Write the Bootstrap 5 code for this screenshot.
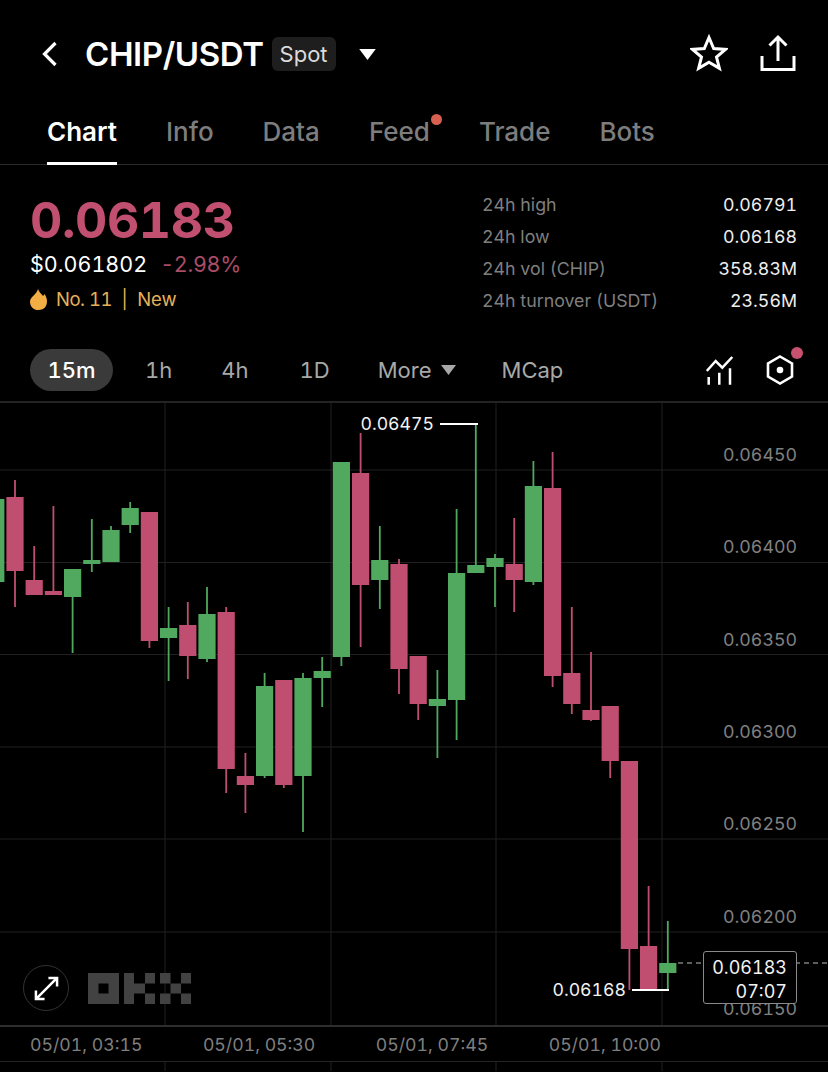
<!DOCTYPE html>
<html lang="en">

<head>
    <meta charset="UTF-8">
    <meta name="viewport" content="width=device-width, initial-scale=1.0">
    <title>CHIP/USDT Spot</title>
    <link href="https://cdn.jsdelivr.net/npm/bootstrap@5.3.0/dist/css/bootstrap.min.css" rel="stylesheet">
    <style>
        html, body { background: #000; }
        body { width: 828px; height: 1072px; overflow: hidden; font-family: Inter, "Liberation Sans", sans-serif; color: #fff; font-variant-numeric: tabular-nums; }

        .top-bar { height: 108px; padding-left: 41px; padding-right: 32px; }
        .pair-name { font-size: 33px; font-weight: 600; letter-spacing: -0.4px; margin-left: 27px; line-height: 1; }
        .spot-tag { background: #1e1e1e; color: #dcdcdc; font-size: 22px; line-height: 34px; padding: 0 8px; border-radius: 6px; margin-left: 8px; }
        .tri-white { margin-left: 23px; }
        .top-icons { gap: 32px; margin-top: -2px; }

        .tab-bar { height: 57px; padding-left: 47px; gap: 49px; border-bottom: 1px solid #2b2b2b; flex-wrap: nowrap; }
        .tab-bar .nav-link { padding: 0; color: #7d7d7d; font-size: 26px; font-weight: 500; height: 56px; line-height: 48px; position: relative; }
        .tab-bar .nav-link.active { color: #fff; font-weight: 600; border-bottom: 3px solid #fff; height: 57px; }
        .feed-dot { position: absolute; top: 6px; right: -12px; width: 11px; height: 11px; border-radius: 50%; background: #d8604f; }

        .stats-area { height: 184px; padding: 0 31px 0 30px; }
        .big-price { color: #c14f70; font-size: 50px; font-weight: 700; line-height: 1; margin-top: 30px; letter-spacing: -0.4px; }
        .usd-line { font-size: 21.5px; line-height: 26px; margin-top: 6px; }
        .pct-val { color: #a94c66; margin-left: 13px; letter-spacing: -0.3px; }
        .rank-line { color: #e6b05a; font-size: 18.5px; line-height: 24px; margin-top: 10px; }
        .flame-icon { margin-right: 9px; }
        .rank-no { letter-spacing: -0.5px; }
        .rank-sep { margin: 0 9.5px; }
        .stat-list { width: 315px; margin-top: 24px; font-size: 17.8px; line-height: 32px; }
        .stat-label { color: #7f7f7f; }
        .stat-val { color: #eee; }

        .range-bar { height: 52px; padding-left: 30px; }
        .range-item { color: #a8a8a8; font-size: 22px; line-height: 42px; }
        .range-pill { background: #3a3a3a; color: #fff; font-weight: 500; width: 83px; height: 42px; border-radius: 21px; text-align: center; }
        .range-tools { position: relative; margin-left: auto; margin-right: 34px; gap: 32px; height: 42px; }
        .tool-dot { position: absolute; right: -9px; top: -2px; width: 12px; height: 12px; border-radius: 50%; background: #c8516f; }

        .chart-wrap { position: relative; width: 828px; height: 624px; border-top: 2px solid #232323; }
        .chart-wrap svg { display: block; }
        .expand-btn { position: absolute; left: 23px; top: 562px; width: 46px; height: 46px; border: 1.5px solid #333; border-radius: 50%; background: #000; }
        .okx-logo { position: absolute; left: 88px; top: 570px; }
        .last-tag { position: absolute; left: 703px; top: 548px; width: 94px; height: 53px; border: 1px solid #8a8a8a; border-radius: 3px; background: #000; color: #f2f2f2; font-size: 18px; line-height: 23.5px; padding: 4px 9px 0 0; text-align: right; }

        .time-axis { height: 37px; border-top: 2px solid #2e2e2e; border-bottom: 1px solid #232323; color: #7f7f7f; font-size: 17.7px; padding-left: 30px; gap: 60.5px; line-height: 35px; white-space: nowrap; }
    </style>
</head>

<body>

    <!-- Title row -->
    <div class="top-bar d-flex align-items-center">
        <svg width="17" height="26" viewBox="0 0 17 26"><path d="M14.5 2 3.5 13l11 11" fill="none" stroke="#fff" stroke-width="3.2"/></svg>
        <span class="pair-name">CHIP/USDT</span>
        <span class="spot-tag">Spot</span>
        <svg class="tri-white" width="17" height="11" viewBox="0 0 18 12"><path d="M0 0h18L9 12z" fill="#fff"/></svg>
        <div class="top-icons ms-auto d-flex align-items-center">
            <svg width="38" height="38" viewBox="0 0 38 38"><path d="M19 3.500l4.700 11 11.800.9-9 7.600 2.900 11.400-10.400-6.200-10.400 6.200 2.900-11.400-9-7.600 11.800-.9z" fill="none" stroke="#fff" stroke-width="3"/></svg>
            <svg width="36" height="38" viewBox="0 0 36 38"><path d="M2 22v13.500h32V22M18 27V3M9.500 11.500 18 3l8.500 8.500" fill="none" stroke="#fff" stroke-width="3"/></svg>
        </div>
    </div>

    <!-- Tabs -->
    <ul class="nav tab-bar">
        <li class="nav-item"><a class="nav-link active" href="#">Chart</a></li>
        <li class="nav-item"><a class="nav-link" href="#">Info</a></li>
        <li class="nav-item"><a class="nav-link" href="#">Data</a></li>
        <li class="nav-item"><a class="nav-link" href="#">Feed<span class="feed-dot"></span></a></li>
        <li class="nav-item"><a class="nav-link" href="#">Trade</a></li>
        <li class="nav-item"><a class="nav-link" href="#">Bots</a></li>
    </ul>

    <!-- Price and 24h stats -->
    <div class="stats-area d-flex justify-content-between">
        <div>
            <div class="big-price">0.06183</div>
            <div class="usd-line">$0.061802<span class="pct-val">-2.98%</span></div>
            <div class="rank-line d-flex align-items-center">
                <svg class="flame-icon" width="17" height="21" viewBox="0 0 17 21"><path d="M8 0c1 3 3 4.500 5 7 .8-.6 1.200-1.300 1.300-2C16 7 17 9.500 17 12.500 17 17.500 13.500 21 8.500 21S0 17.500 0 12.700C0 8 6.500 5.500 8 0z" fill="#f0ae45"/></svg>
                <span class="rank-no">No. 11</span><span class="rank-sep">|</span><span>New</span>
            </div>
        </div>
        <div class="stat-list">
            <div class="d-flex justify-content-between"><span class="stat-label">24h high</span><span class="stat-val">0.06791</span></div>
            <div class="d-flex justify-content-between"><span class="stat-label">24h low</span><span class="stat-val">0.06168</span></div>
            <div class="d-flex justify-content-between"><span class="stat-label">24h vol (CHIP)</span><span class="stat-val">358.83M</span></div>
            <div class="d-flex justify-content-between"><span class="stat-label">24h turnover (USDT)</span><span class="stat-val">23.56M</span></div>
        </div>
    </div>

    <!-- Time ranges -->
    <div class="range-bar d-flex align-items-start">
        <span class="range-item range-pill">15m</span>
        <span class="range-item" style="margin-left:32px">1h</span>
        <span class="range-item" style="margin-left:49px">4h</span>
        <span class="range-item" style="margin-left:51px">1D</span>
        <span class="range-item" style="margin-left:48px">More</span>
        <svg style="margin:16px 0 0 9px" width="15" height="10" viewBox="0 0 15 10"><path d="M0 0h15L7.500 10z" fill="#a8a8a8"/></svg>
        <span class="range-item" style="margin-left:46px">MCap</span>
        <div class="range-tools d-flex align-items-center">
            <svg width="28" height="29" viewBox="0 0 28 29"><path d="M.8 15 9.700 5l6.600 6.700L26.300 1M2.700 21v7.700M13.300 16.700v12M24 12.300v16.400" fill="none" stroke="#fff" stroke-width="2.500"/></svg>
            <svg width="28" height="30" viewBox="0 0 28 30"><path d="M14 1.500l12 7v13l-12 7-12-7v-13z" fill="none" stroke="#fff" stroke-width="2.600"/><circle cx="14" cy="15" r="3.300" fill="#fff"/></svg>
            <span class="tool-dot"></span>
        </div>
    </div>

    <!-- Chart -->
    <div class="chart-wrap">
        <svg id="chart" width="828" height="622" viewBox="0 403 828 622"></svg>
        <div class="expand-btn d-flex align-items-center justify-content-center">
            <svg width="25" height="25" viewBox="0 0 26 26"><path d="M15 2h9v9M24 2 2 24M2 15v9h9" fill="none" stroke="#fff" stroke-width="2.600"/></svg>
        </div>
        <svg class="okx-logo" width="103" height="31" viewBox="0 0 103 31" fill="#424242">
            <path fill-rule="evenodd" d="M0 0h31v31H0zM10.500 10.500v10h10v-10z"/>
            <path d="M36 0h10v31H36zM46 10.500h11v10H46zM57 0h10v10.500H57zM57 20.500h10V31H57zM72 0h10.500v10.500H72zM82.500 10.500H93v10H82.500zM93 0h10v10.500H93zM72 20.500h10.500V31H72zM93 20.500h10V31H93z"/>
        </svg>
        <div class="last-tag">0.06183<br>07:07</div>
    </div>

    <!-- Time axis -->
    <div class="time-axis d-flex">
        <span>05/01, 03:15</span>
        <span>05/01, 05:30</span>
        <span>05/01, 07:45</span>
        <span>05/01, 10:00</span>
    </div>
    <svg class="d-block" width="828" height="9"><path d="M165 0v9M331 0v9M496 0v9M662 0v9" stroke="#232323"/></svg>

    <script>
        const RED = "#c04e70", GREEN = "#50a95e";

        // index, colour, wick top, body top, body bottom, wick bottom
        const candles = [
            [-1, GREEN, 499, 499, 582, 582],
            [0, RED, 480, 497, 571, 607],
            [1, RED, 546, 580, 595, 595],
            [2, RED, 506, 591, 595, 595],
            [3, GREEN, 569, 569, 597, 653],
            [4, GREEN, 519, 560, 564, 572],
            [5, GREEN, 526, 530, 562, 562],
            [6, GREEN, 502, 508, 525, 533],
            [7, RED, 512, 512, 641, 648],
            [8, GREEN, 607, 628, 638, 681],
            [9, RED, 602, 625, 656, 679],
            [10, GREEN, 587, 614, 659, 662],
            [11, RED, 607, 612, 769, 793],
            [12, RED, 753, 776, 785, 813],
            [13, GREEN, 673, 686, 776, 778],
            [14, RED, 680, 680, 785, 788],
            [15, GREEN, 673, 678, 776, 832],
            [16, GREEN, 657, 671, 678, 707],
            [17, GREEN, 462, 462, 657, 666],
            [18, RED, 433, 473, 585, 647],
            [19, GREEN, 526, 560, 580, 609],
            [20, RED, 559, 564, 669, 694],
            [21, RED, 656, 656, 704, 720],
            [22, GREEN, 670, 699, 706, 758],
            [23, GREEN, 509, 573, 700, 740],
            [24, GREEN, 424, 565, 573, 573],
            [25, GREEN, 554, 558, 567, 607],
            [26, RED, 518, 564, 580, 612],
            [27, GREEN, 461, 486, 582, 585],
            [28, RED, 452, 488, 676, 687],
            [29, RED, 607, 673, 704, 714],
            [30, RED, 652, 710, 720, 721],
            [31, RED, 706, 706, 761, 778],
            [32, RED, 761, 761, 949, 990],
            [33, RED, 886, 946, 990, 990],
            [34, GREEN, 921, 963, 973, 990]
        ];

        let out = "";
        [470, 562.500, 654.500, 747, 839, 932].forEach(y => {
            out += `<line x1="0" x2="828" y1="${y}" y2="${y}" stroke="#202020"/>`;
        });
        [165, 331, 496, 662].forEach(x => {
            out += `<line x1="${x}" x2="${x}" y1="403" y2="1025" stroke="#202020"/>`;
        });

        // price axis
        [["0.06450", 455], ["0.06400", 547], ["0.06350", 640], ["0.06300", 732], ["0.06250", 824], ["0.06200", 917], ["0.06150", 1009]].forEach(p => {
            out += `<text x="797" y="${p[1] + 6}" text-anchor="end" fill="#808080" font-size="17.800">${p[0]}</text>`;
        });

        // last price line
        out += `<line x1="678" x2="828" y1="963" y2="963" stroke="#bbb" stroke-dasharray="5 4"/>`;

        candles.forEach(c => {
            let x = 15 + 19.2 * c[0];
            out += `<rect x="${x - 0.9}" y="${c[2]}" width="1.800" height="${c[5] - c[2]}" fill="${c[1]}"/>`;
            out += `<rect x="${x - 8.6}" y="${c[3]}" width="17.200" height="${c[4] - c[3]}" fill="${c[1]}"/>`;
        });

        // high and low markers
        out += `<path d="M440 424h38M632 990h37" stroke="#fff" stroke-width="2"/>`;
        out += `<text x="434" y="430" text-anchor="end" fill="#f2f2f2" font-size="17.700">0.06475</text>`;
        out += `<text x="626" y="996" text-anchor="end" fill="#f2f2f2" font-size="17.700">0.06168</text>`;

        document.getElementById("chart").innerHTML = out;
    </script>

    <script src="https://cdn.jsdelivr.net/npm/bootstrap@5.3.0/dist/js/bootstrap.bundle.min.js"></script>
</body>

</html>
